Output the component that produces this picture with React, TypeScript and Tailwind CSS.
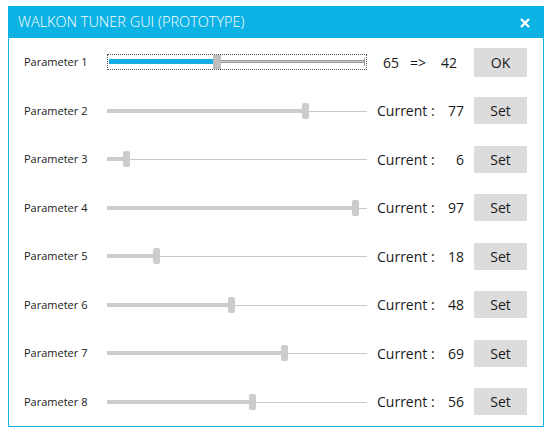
import React from 'react';

const FONT = { fontFamily: '"Open Sans", "Noto Sans", sans-serif' };

const params = [
  { name: 'Parameter 1', value: 42, current: 65 },
  { name: 'Parameter 2', value: 77 },
  { name: 'Parameter 3', value: 6 },
  { name: 'Parameter 4', value: 97 },
  { name: 'Parameter 5', value: 18 },
  { name: 'Parameter 6', value: 48 },
  { name: 'Parameter 7', value: 69 },
  { name: 'Parameter 8', value: 56 },
];

function thumbLeft(value: number) {
  return Math.round(4 + (value / 100) * 252 - 3.5);
}

function Slider({ value, active }: { value: number; active?: boolean }) {
  const left = thumbLeft(value);
  if (active) {
    return (
      <div className="relative w-[260px] h-[16px] border border-dotted border-[#555555]">
        {/* filled part */}
        <div
          className="absolute top-[4px] left-[1px] h-[5px] bg-[#12ade3]"
          style={{ width: left - 1 }}
        />
        {/* remaining track */}
        <div
          className="absolute top-[5px] right-[2px] h-[3px] bg-[#c4c4c4] border-y border-[#9c9c9c]"
          style={{ left: left + 7 }}
        />
        <div className="absolute top-[3px] right-[1px] w-px h-[8px] bg-[#9c9c9c]" />
        {/* thumb */}
        <div
          className="absolute top-0 w-[8px] h-[14px] bg-[#bdbdbd]"
          style={{ left: left - 1 }}
        />
      </div>
    );
  }
  return (
    <div className="relative w-[260px] h-[16px]">
      <div
        className="absolute top-[6px] left-0 h-[4px] bg-[#cccccc]"
        style={{ width: left }}
      />
      <div
        className="absolute top-[8px] right-0 h-px bg-[#c8c8c8]"
        style={{ left: left + 7 }}
      />
      <div
        className="absolute top-0 w-[7px] h-[16px] rounded-[2px] bg-[#cccccc]"
        style={{ left }}
      />
    </div>
  );
}

export default function App() {
  return (
    <div className="w-[550px] h-[441px] bg-white pt-[6px] pl-[8px]" style={FONT}>
      <div className="w-[536px] h-[421px] border border-[#0db2e4] flex flex-col bg-white">
        {/* title bar */}
        <div className="h-[31px] bg-[#0db2e4] flex items-center justify-between pl-[9px] pr-[13px] text-white">
          <span className="text-[14.5px] font-light leading-none">
            WALKON TUNER GUI (PROTOTYPE)
          </span>
          <svg width="10" height="10" viewBox="0 0 10 10">
            <path d="M1 1L9 9M9 1L1 9" stroke="white" strokeWidth="2.3" />
          </svg>
        </div>

        {/* parameter rows */}
        <div className="flex-1 flex flex-col">
          {params.map((p, i) => (
            <div key={p.name} className="flex-1 flex items-center pl-[15px] text-[#1a1a1a]">
              <span className="w-[83px] text-[11px]">{p.name}</span>
              <Slider value={p.value} active={i === 0} />
              {i === 0 ? (
                <div className="ml-[16px] w-[81px] flex items-center text-[14px]">
                  <span className="w-[27px]">{p.current}</span>
                  <span className="w-[31px]">=&gt;</span>
                  <span>{p.value}</span>
                </div>
              ) : (
                <div className="ml-[10px] w-[87px] flex items-center justify-between text-[14px]">
                  <span>Current :</span>
                  <span>{p.value}</span>
                </div>
              )}
              <button
                type="button"
                className={
                  i === 0
                    ? 'ml-[10px] w-[53px] h-[29px] bg-[#dcdcdc] text-[14px]'
                    : 'ml-[10px] w-[53px] h-[27px] bg-[#dcdcdc] text-[14px]'
                }
              >
                {i === 0 ? 'OK' : 'Set'}
              </button>
            </div>
          ))}
        </div>
      </div>
    </div>
  );
}
